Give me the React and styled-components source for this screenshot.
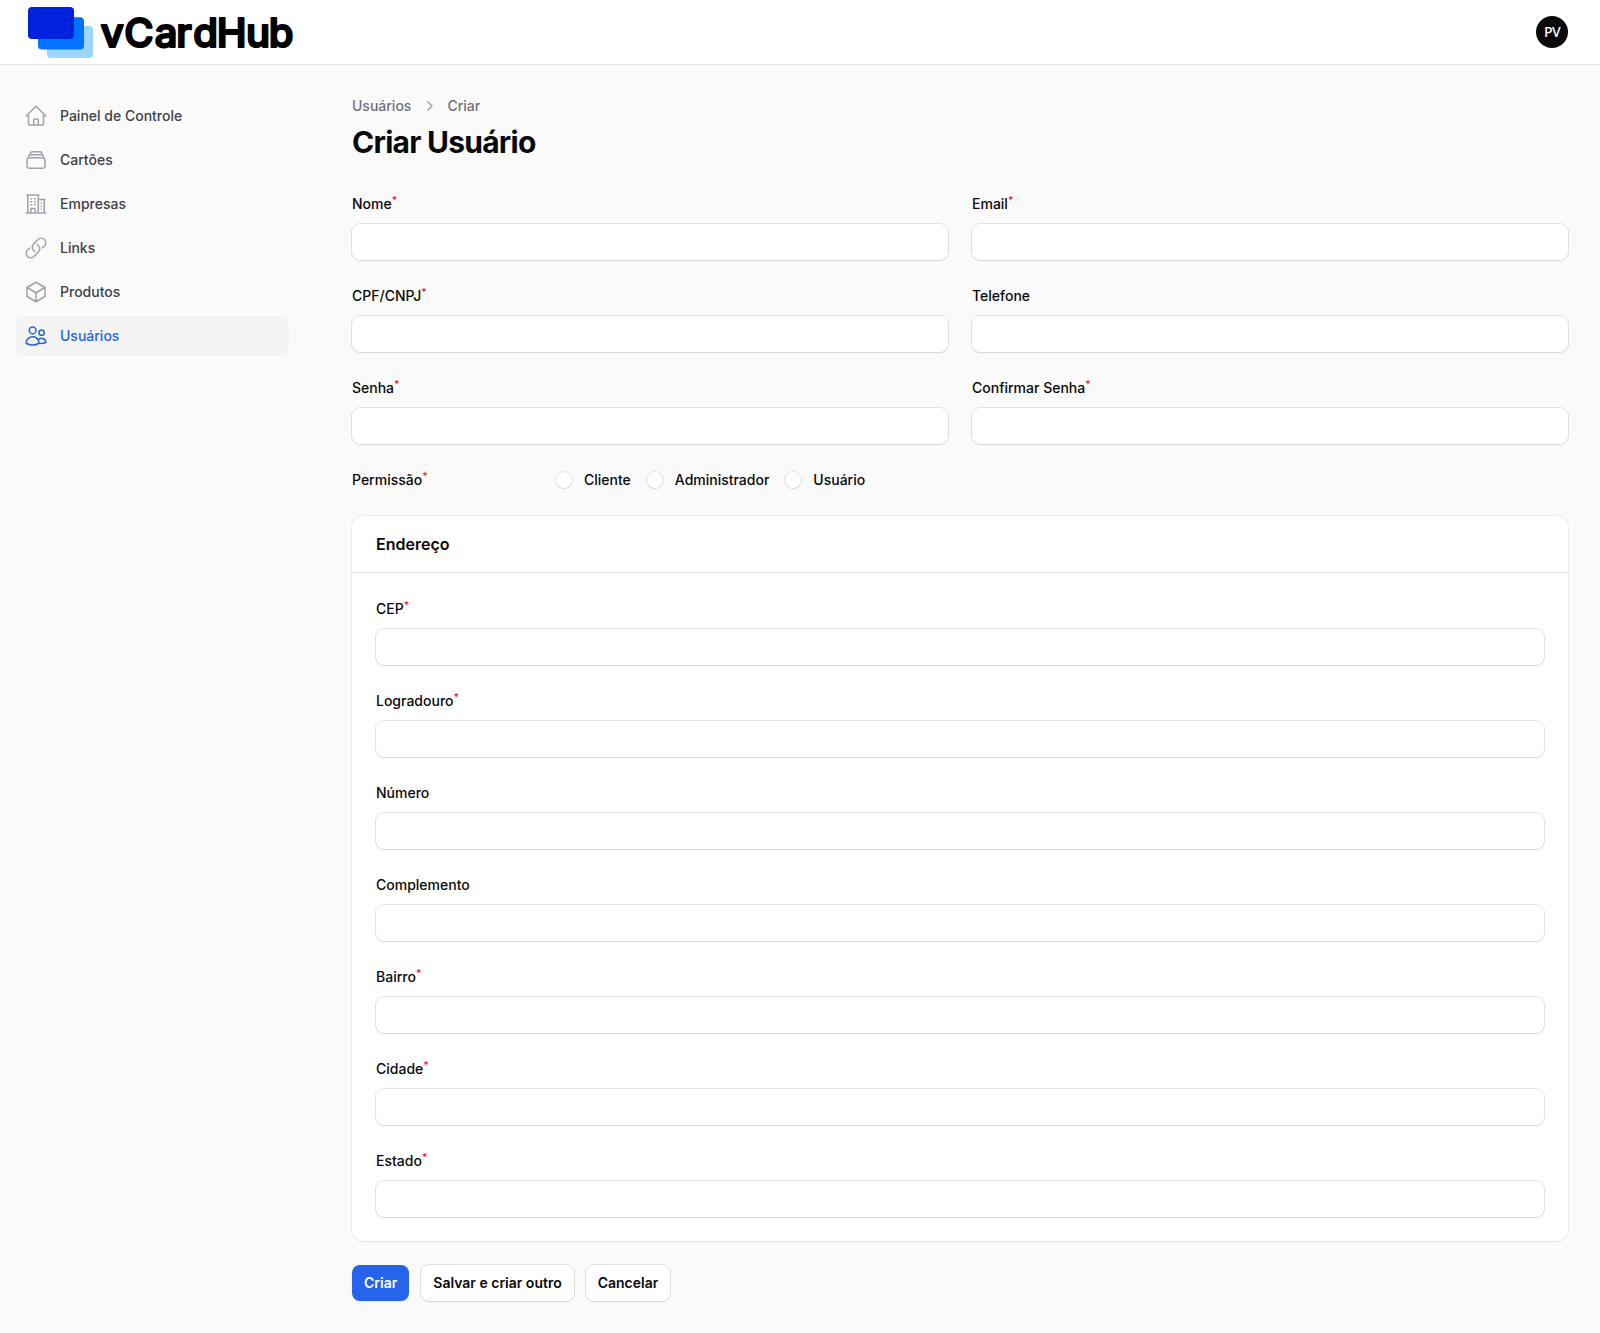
import React from 'react';
import styled, { createGlobalStyle } from 'styled-components';
import {
  HiOutlineHome,
  HiOutlineRectangleStack,
  HiOutlineBuildingOffice2,
  HiOutlineLink,
  HiOutlineCube,
  HiOutlineUsers,
  HiMiniChevronRight,
} from 'react-icons/hi2';

const GlobalStyle = createGlobalStyle`
  *, *::before, *::after { box-sizing: border-box; }
  body {
    margin: 0;
    background: #fafafa;
    color: #09090b;
    font-family: Inter, "Liberation Sans", sans-serif;
    font-size: 14px;
    line-height: 24px;
  }
  h1, h2, ul, ol { margin: 0; padding: 0; list-style: none; }
  button, input { font: inherit; color: inherit; }
`;

const Page = styled.div`
  min-height: 1333px;
`;

const Topbar = styled.header`
  display: flex;
  align-items: center;
  justify-content: space-between;
  height: 64px;
  padding: 0 32px 0 24px;
  background: #fff;
  box-shadow: 0 0 0 1px rgba(9, 9, 11, 0.05), 0 1px 2px rgba(0, 0, 0, 0.05);
`;

const Brand = styled.svg`
  display: block;
  width: 276px;
  height: 64px;

  text {
    font-family: Inter, "Liberation Sans", sans-serif;
    font-size: 40px;
    font-weight: 500;
    stroke: #000;
    stroke-width: 2.2px;
    stroke-linejoin: round;
  }
`;

const Avatar = styled.div`
  display: flex;
  align-items: center;
  justify-content: center;
  width: 32px;
  height: 32px;
  border-radius: 50%;
  background: #09090b;
  color: #fff;
  font: 500 14px/32px "Noto Sans", "Open Sans", sans-serif;
  letter-spacing: -0.5px;
`;

const Body = styled.div`
  display: flex;
`;

const Sidebar = styled.nav`
  flex: 0 0 320px;
  padding: 32px 31px 32px 16px;
`;

const NavList = styled.ul`
  display: flex;
  flex-direction: column;
  gap: 4px;
`;

const NavItem = styled.li`
  display: flex;
  align-items: center;
  gap: 12px;
  height: 40px;
  padding: 8px;
  border-radius: 8px;
  font-weight: 500;
  background: ${(p) => (p.$active ? '#f4f4f5' : 'transparent')};
  color: ${(p) => (p.$active ? '#2563eb' : '#3f3f46')};

  svg {
    width: 24px;
    height: 24px;
    color: ${(p) => (p.$active ? '#2563eb' : '#a1a1aa')};
  }
`;

const Main = styled.main`
  flex: 1;
  padding: 32px;
`;

const Breadcrumbs = styled.ol`
  display: flex;
  align-items: center;
  gap: 8px;
  margin-bottom: 8px;
  line-height: 20px;
  font-weight: 500;
  color: #71717a;

  svg {
    width: 20px;
    height: 20px;
    color: #a1a1aa;
  }
`;

const Crumb = styled.li`
  display: flex;
  align-items: center;
  gap: 8px;
`;

const Title = styled.h1`
  font-size: 30px;
  line-height: 36px;
  font-weight: 700;
  letter-spacing: -0.75px;
`;

const Form = styled.form`
  display: flex;
  flex-direction: column;
  gap: 24px;
  margin-top: 32px;
`;

const FieldGrid = styled.div`
  display: grid;
  grid-template-columns: repeat(${(p) => p.$columns}, minmax(0, 1fr));
  gap: 24px;
`;

const FieldWrap = styled.div`
  display: grid;
  gap: 8px;
`;

const Label = styled.label`
  height: 24px;
  font-weight: 500;

  sup {
    position: relative;
    top: -0.5em;
    vertical-align: baseline;
    font-size: 75%;
    line-height: 0;
    color: #dc2626;
  }
`;

const Input = styled.input`
  display: block;
  width: 100%;
  height: 36px;
  padding: 6px 12px;
  border: 0;
  border-radius: 8px;
  background: #fff;
  box-shadow: 0 0 0 1px rgba(9, 9, 11, 0.1), 0 1px 2px rgba(0, 0, 0, 0.05);
`;

const PermissionRow = styled.div`
  display: grid;
  grid-template-columns: 188px auto;
  column-gap: 16px;
`;

const RadioGroup = styled.div`
  display: flex;
  gap: 16px;
`;

const RadioOption = styled.label`
  display: flex;
  align-items: center;
  gap: 12px;
  font-weight: 500;
`;

const Radio = styled.input`
  appearance: none;
  width: 16px;
  height: 16px;
  margin: 0;
  border-radius: 50%;
  background: #fff;
  box-shadow: 0 0 0 1px rgba(9, 9, 11, 0.1), 0 1px 2px rgba(0, 0, 0, 0.05);
`;

const Section = styled.section`
  border-radius: 12px;
  background: #fff;
  box-shadow: 0 0 0 1px rgba(9, 9, 11, 0.05), 0 1px 2px rgba(0, 0, 0, 0.05);
`;

const SectionTitle = styled.h2`
  padding: 16px 24px;
  font-size: 16px;
  line-height: 24px;
  font-weight: 600;
`;

const SectionBody = styled.div`
  padding: 24px;
  border-top: 1px solid #e4e4e7;
`;

const Actions = styled.div`
  display: flex;
  gap: 12px;
`;

const Button = styled.button`
  height: 36px;
  padding: 8px 12px;
  border: 0;
  border-radius: 8px;
  line-height: 20px;
  font-weight: 600;
  background: ${(p) => (p.$primary ? '#2563eb' : '#fff')};
  color: ${(p) => (p.$primary ? '#fff' : '#09090b')};
  box-shadow: ${(p) => (p.$primary ? '' : '0 0 0 1px rgba(9, 9, 11, 0.1), ')}0 1px 2px rgba(0, 0, 0, 0.05);
`;

const navigation = [
  { label: 'Painel de Controle', icon: HiOutlineHome },
  { label: 'Cartões', icon: HiOutlineRectangleStack },
  { label: 'Empresas', icon: HiOutlineBuildingOffice2 },
  { label: 'Links', icon: HiOutlineLink },
  { label: 'Produtos', icon: HiOutlineCube },
  { label: 'Usuários', icon: HiOutlineUsers, active: true },
];

const userFields = [
  ['Nome', true],
  ['Email', true],
  ['CPF/CNPJ', true],
  ['Telefone', false],
  ['Senha', true],
  ['Confirmar Senha', true],
];

const addressFields = [
  ['CEP', true],
  ['Logradouro', true],
  ['Número', false],
  ['Complemento', false],
  ['Bairro', true],
  ['Cidade', true],
  ['Estado', true],
];

const roles = ['Cliente', 'Administrador', 'Usuário'];

function Field({ label, required }) {
  return (
    <FieldWrap>
      <Label>
        {label}
        {required && <sup>*</sup>}
      </Label>
      <Input type="text" aria-label={label} />
    </FieldWrap>
  );
}

function Logo() {
  return (
    <Brand viewBox="24 0 276 64" role="img" aria-label="vCardHub">
      <rect x="47" y="26" width="46" height="32" rx="4" fill="#9ad6ff" />
      <rect x="38" y="17.3" width="46" height="32.2" rx="4" fill="#0072ff" />
      <rect x="28" y="7" width="46" height="32" rx="4" fill="#0022dd" />
      <text y="47.2" x="100.8 124.2 154.8 176.3 193.2 216.8 246 268.8">
        vCardHub
      </text>
    </Brand>
  );
}

export default function App() {
  return (
    <Page>
      <GlobalStyle />
      <Topbar>
        <Logo />
        <Avatar>PV</Avatar>
      </Topbar>
      <Body>
        <Sidebar>
          <NavList>
            {navigation.map(({ label, icon: Icon, active }) => (
              <NavItem key={label} $active={active}>
                <Icon />
                {label}
              </NavItem>
            ))}
          </NavList>
        </Sidebar>
        <Main>
          <Breadcrumbs>
            <Crumb>Usuários</Crumb>
            <Crumb>
              <HiMiniChevronRight />
              Criar
            </Crumb>
          </Breadcrumbs>
          <Title>Criar Usuário</Title>
          <Form>
            <FieldGrid $columns={2}>
              {userFields.map(([label, required]) => (
                <Field key={label} label={label} required={required} />
              ))}
            </FieldGrid>
            <PermissionRow>
              <Label as="span">
                Permissão<sup>*</sup>
              </Label>
              <RadioGroup>
                {roles.map((role) => (
                  <RadioOption key={role}>
                    <Radio type="radio" name="role" />
                    {role}
                  </RadioOption>
                ))}
              </RadioGroup>
            </PermissionRow>
            <Section>
              <SectionTitle>Endereço</SectionTitle>
              <SectionBody>
                <FieldGrid $columns={1}>
                  {addressFields.map(([label, required]) => (
                    <Field key={label} label={label} required={required} />
                  ))}
                </FieldGrid>
              </SectionBody>
            </Section>
            <Actions>
              <Button type="button" $primary>Criar</Button>
              <Button type="button">Salvar e criar outro</Button>
              <Button type="button">Cancelar</Button>
            </Actions>
          </Form>
        </Main>
      </Body>
    </Page>
  );
}
